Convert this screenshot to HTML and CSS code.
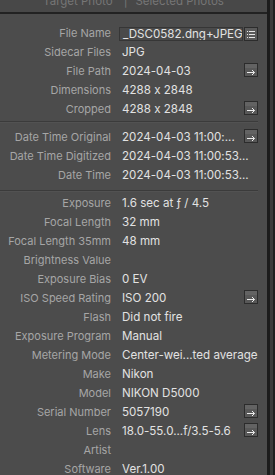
FILE: index.html
```html
<!DOCTYPE html>
<html>
<head>
<meta charset="utf-8">
<link rel="stylesheet" href="styles.css">
</head>
<body>
<div class="app">
  <div class="panel">
    <div class="tabs"><div class="tabs-inner"><span>Target Photo</span><span class="bar">|</span><span>Selected Photos</span></div></div>
    <div class="rows">
      <div class="row"><span class="lbl">File Name</span><span class="val field">_DSC0582.dng+JPEG</span><span class="btn"><svg width="14" height="14" viewBox="0 0 14 14"><rect x="0.5" y="0.5" width="13" height="13" fill="#5a5a5a" stroke="#2c2c2c"/><g fill="#e6e6e6"><rect x="3" y="4" width="1" height="1"/><rect x="3" y="7" width="1" height="1"/><rect x="3" y="10" width="1" height="1"/><rect x="5" y="4" width="6" height="1"/><rect x="5" y="7" width="6" height="1"/><rect x="5" y="10" width="6" height="1"/></g></svg></span></div>
      <div class="row"><span class="lbl">Sidecar Files</span><span class="val">JPG</span></div>
      <div class="row"><span class="lbl">File Path</span><span class="val">2024-04-03</span><span class="btn arrow"><svg width="14" height="14" viewBox="0 0 14 14"><rect x="0.5" y="0.5" width="13" height="13" fill="#585858" stroke="#2c2c2c"/><rect x="1" y="1" width="12" height="4" fill="#636363"/><path d="M3 9.5H10.5M8 7L10.5 9.5L8 12" fill="none" stroke="#ececec" stroke-width="1"/></svg></span></div>
      <div class="row"><span class="lbl">Dimensions</span><span class="val">4288 x 2848</span></div>
      <div class="row"><span class="lbl">Cropped</span><span class="val">4288 x 2848</span><span class="btn arrow"><svg width="14" height="14" viewBox="0 0 14 14"><rect x="0.5" y="0.5" width="13" height="13" fill="#585858" stroke="#2c2c2c"/><rect x="1" y="1" width="12" height="4" fill="#636363"/><path d="M3 9.5H10.5M8 7L10.5 9.5L8 12" fill="none" stroke="#ececec" stroke-width="1"/></svg></span></div>
      <div class="sep s1"></div>
      <div class="row"><span class="lbl">Date Time Original</span><span class="val">2024-04-03 11:00:...</span><span class="btn arrow"><svg width="14" height="14" viewBox="0 0 14 14"><rect x="0.5" y="0.5" width="13" height="13" fill="#585858" stroke="#2c2c2c"/><rect x="1" y="1" width="12" height="4" fill="#636363"/><path d="M3 9.5H10.5M8 7L10.5 9.5L8 12" fill="none" stroke="#ececec" stroke-width="1"/></svg></span></div>
      <div class="row"><span class="lbl">Date Time Digitized</span><span class="val">2024-04-03 11:00:53...</span></div>
      <div class="row"><span class="lbl">Date Time</span><span class="val">2024-04-03 11:00:53...</span></div>
      <div class="sep s2"></div>
      <div class="row"><span class="lbl">Exposure</span><span class="val">1.6 sec at ƒ / 4.5</span></div>
      <div class="row"><span class="lbl">Focal Length</span><span class="val">32 mm</span></div>
      <div class="row"><span class="lbl">Focal Length 35mm</span><span class="val">48 mm</span></div>
      <div class="row"><span class="lbl">Brightness Value</span><span class="val"></span></div>
      <div class="row"><span class="lbl">Exposure Bias</span><span class="val">0 EV</span></div>
      <div class="row"><span class="lbl">ISO Speed Rating</span><span class="val">ISO 200</span><span class="btn arrow"><svg width="14" height="14" viewBox="0 0 14 14"><rect x="0.5" y="0.5" width="13" height="13" fill="#585858" stroke="#2c2c2c"/><rect x="1" y="1" width="12" height="4" fill="#636363"/><path d="M3 9.5H10.5M8 7L10.5 9.5L8 12" fill="none" stroke="#ececec" stroke-width="1"/></svg></span></div>
      <div class="row"><span class="lbl">Flash</span><span class="val">Did not fire</span></div>
      <div class="row"><span class="lbl">Exposure Program</span><span class="val">Manual</span></div>
      <div class="row"><span class="lbl">Metering Mode</span><span class="val">Center-wei...ted average</span></div>
      <div class="row"><span class="lbl">Make</span><span class="val">Nikon</span></div>
      <div class="row"><span class="lbl">Model</span><span class="val">NIKON D5000</span></div>
      <div class="row"><span class="lbl">Serial Number</span><span class="val">5057190</span><span class="btn arrow"><svg width="14" height="14" viewBox="0 0 14 14"><rect x="0.5" y="0.5" width="13" height="13" fill="#585858" stroke="#2c2c2c"/><rect x="1" y="1" width="12" height="4" fill="#636363"/><path d="M3 9.5H10.5M8 7L10.5 9.5L8 12" fill="none" stroke="#ececec" stroke-width="1"/></svg></span></div>
      <div class="row"><span class="lbl">Lens</span><span class="val">18.0-55.0...f/3.5-5.6</span><span class="btn arrow"><svg width="14" height="14" viewBox="0 0 14 14"><rect x="0.5" y="0.5" width="13" height="13" fill="#585858" stroke="#2c2c2c"/><rect x="1" y="1" width="12" height="4" fill="#636363"/><path d="M3 9.5H10.5M8 7L10.5 9.5L8 12" fill="none" stroke="#ececec" stroke-width="1"/></svg></span></div>
      <div class="row"><span class="lbl">Artist</span><span class="val"></span></div>
      <div class="row"><span class="lbl">Software</span><span class="val">Ver.1.00</span></div>
    </div>
  </div>
  <div class="rail"><div class="r1"></div><div class="r2"></div><div class="r3"></div></div>
</div>
</body>
</html>
```
FILE: styles.css
```css
* { box-sizing: border-box; margin: 0; padding: 0; }
html, body { width: 275px; height: 475px; overflow: hidden; background: #4c4c4c; }
body { font-family: Inter, "Noto Sans", sans-serif; font-feature-settings: "calt" 0; }
.app { display: flex; height: 475px; }
.panel { width: 267px; flex: none; background: #4c4c4c; display: flex; flex-direction: column; overflow: hidden; }
.rail { flex: 1; display: flex; }
.r1 { width: 3px; background: #1c1c1c; }
.r2 { width: 3px; background: #3b3b3b; }
.r3 { flex: 1; background: #202020; }
.tabs { height: 14px; flex: none; background: #484848; border-bottom: 2px solid #222; overflow: hidden; display: flex; justify-content: center; }
.tabs-inner { margin-top: -6px; font-size: 11.5px; line-height: 14px; color: #767676; white-space: nowrap; }
.tabs-inner .bar { margin: 0 8px 0 11px; }
.rows { padding: 10px 9px 0 0; }
.row { display: flex; align-items: flex-start; height: 19px; line-height: 19px; white-space: nowrap; }
.lbl { width: 111px; flex: none; text-align: right; font-size: 11px; color: #a6a6a6; margin-right: 11px; }
.val { flex: 1; min-width: 0; overflow: hidden; font-size: 11.6px; color: #e2e2e2; }
.field { margin-left: -3px; padding-left: 3px; margin-top: 3px; height: 14px; line-height: 12px; border: 1px solid #363636; background: #4a4a4a; margin-right: 1px; }
.btn { width: 14px; height: 14px; flex: none; margin-top: 3px; display: block; }
.btn svg { display: block; }
.btn.arrow { margin-top: 1px; }
.sep { height: 9px; }
.sep::before { content: ""; display: block; height: 1px; background: #3b3b3b; box-shadow: 0 1px 0 #525252; }
.s1 { padding-top: 2px; }
.s2 { padding-top: 5px; }
```
